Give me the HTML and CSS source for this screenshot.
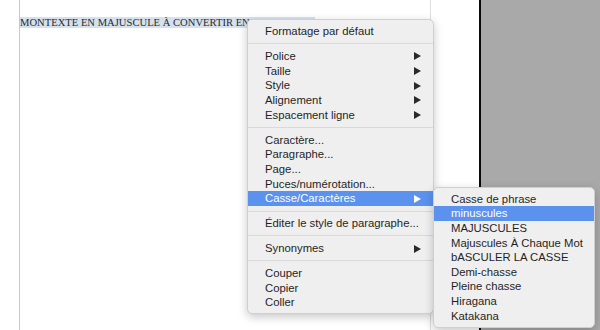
FILE: index.html
```html
<!DOCTYPE html>
<html lang="fr">
<head>
    <meta charset="UTF-8">
    <title>Casse/Caractères</title>
    <link rel="stylesheet" href="styles.css">
</head>
<body>
    <div class="desk">
        <div class="margin"></div>
        <div class="page">
            <p class="line"><span class="sel">MONTEXTE EN MAJUSCULE À CONVERTIR EN MINUSCULE</span></p>
        </div>
        <div class="gap"></div>
        <div class="pane"></div>
    </div>

    <!-- context menu -->
    <ul class="menu">
        <li class="item">Formatage par défaut</li>
        <li class="sep"></li>
        <li class="item sub">Police</li>
        <li class="item sub">Taille</li>
        <li class="item sub">Style</li>
        <li class="item sub">Alignement</li>
        <li class="item sub">Espacement ligne</li>
        <li class="sep"></li>
        <li class="item">Caractère...</li>
        <li class="item">Paragraphe...</li>
        <li class="item">Page...</li>
        <li class="item">Puces/numérotation...</li>
        <li class="item sub active">Casse/Caractères
            <ul class="submenu">
                <li class="item">Casse de phrase</li>
                <li class="item active">minuscules</li>
                <li class="item">MAJUSCULES</li>
                <li class="item">Majuscules À Chaque Mot</li>
                <li class="item">bASCULER LA CASSE</li>
                <li class="item">Demi-chasse</li>
                <li class="item">Pleine chasse</li>
                <li class="item">Hiragana</li>
                <li class="item">Katakana</li>
            </ul>
        </li>
        <li class="sep"></li>
        <li class="item">Éditer le style de paragraphe...</li>
        <li class="sep"></li>
        <li class="item sub">Synonymes</li>
        <li class="sep"></li>
        <li class="item">Couper</li>
        <li class="item">Copier</li>
        <li class="item">Coller</li>
    </ul>
</body>
</html>
```

FILE: styles.css
```css
body {
    margin: 0;
    background-color: #fff;
    font-family: "Liberation Sans", Arial, sans-serif;
}

.desk {
    display: flex;
    height: 330px;
}

.margin {
    width: 19px;
}

.page {
    width: 410px;
    border-left: 1px solid #c9c9c9;
    border-right: 1px solid #dedede;
}

.line {
    margin: 16px 0 0 0;
    font-family: "Liberation Serif", "Times New Roman", serif;
    font-size: 10.6px;
    line-height: 14px;
    color: #2a2a2a;
}

.sel {
    background-color: #d5e1ef;
    padding-right: 1px;
}

.gap {
    width: 48px;
}

.pane {
    flex: 1;
    background-color: #a9a9a9;
    border-left: 2px solid #0a0a0a;
}

/* Menus */
.menu,
.submenu {
    list-style: none;
    margin: 0;
    background-color: #efefef;
    border: 1px solid #cfcfcf;
    border-radius: 5px;
    box-shadow: 0 3px 10px rgba(0, 0, 0, 0.22);
    font-size: 11.3px;
    color: #1f1f1f;
}

.menu {
    position: absolute;
    left: 247px;
    top: 19px;
    width: 185px;
    padding: 4px 0 3px 0;
}

.item {
    position: relative;
    height: 14.7px;
    line-height: 14.7px;
    padding-left: 17px;
    white-space: nowrap;
}

.sub::after {
    content: "";
    position: absolute;
    right: 12px;
    top: 3.5px;
    border-top: 4px solid transparent;
    border-bottom: 4px solid transparent;
    border-left: 7px solid #2a2a2a;
}

.item.active {
    background-color: #5a92ee;
    color: #fff;
}

.sub.active::after {
    border-left-color: #fff;
}

.sep {
    height: 1px;
    margin: 4.6px 0;
    background-color: #d9d9d9;
}

.submenu {
    position: absolute;
    left: 185px;
    top: -4px;
    width: 160px;
    padding: 3.5px 0;
    color: #1f1f1f;
}

.submenu .item {
    height: 14.6px;
    line-height: 14.6px;
    padding-left: 17px;
}
```
